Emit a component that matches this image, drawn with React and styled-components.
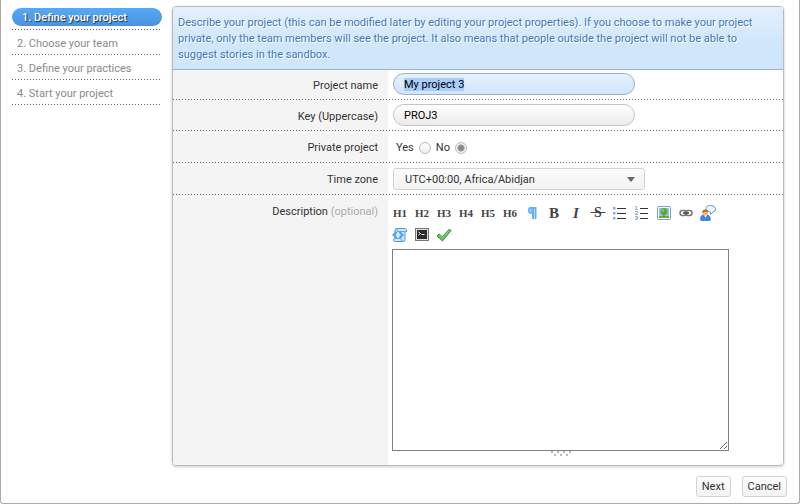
import React, { useEffect, useRef } from "react";
import styled, { createGlobalStyle, css } from "styled-components";

const GlobalStyle = createGlobalStyle`
  *, *::before, *::after { box-sizing: border-box; }
  body {
    margin: 0;
    background: #fff;
    color: #333;
    font: 11px/16px Roboto, "Noto Sans", sans-serif;
  }
  button, input, select, textarea { font: inherit; color: inherit; margin: 0; }
`;

const dotted = css`
  background-image: repeating-linear-gradient(to right, #666 0 1px, transparent 1px 3px);
  background-size: 100% 1px;
  background-position: left bottom;
  background-repeat: no-repeat;
`;

const Dialog = styled.div`
  display: flex;
  flex-direction: column;
  min-height: 100vh;
  padding: 6px 12px 6px 11px;
  border: 1px solid #aaa;
  border-top: 0;
  border-radius: 0 0 3px 3px;
`;

const Columns = styled.div`
  display: flex;
  flex: 1;
  align-items: stretch;
  gap: 10px;
  padding-right: 3px;
`;

const Steps = styled.ol`
  flex: 0 0 150px;
  margin: 0;
  padding: 0;
  list-style: none;
`;

const Step = styled.li`
  height: 25px;
  padding: 4px 0 2px;
  ${dotted}
  background-size: 148px 1px;
  &:first-child {
    height: 24px;
    padding-top: 2px;
  }
`;

const StepLink = styled.a`
  display: block;
  height: 18px;
  padding: 0 5px;
  line-height: 20px;
  color: #8a8a8a;
  text-decoration: none;
  &[aria-current="step"] {
    padding: 0 10px;
    border-radius: 9px;
    color: #fff;
    font-weight: 500;
    text-shadow: 1px 1px 1px #234;
    background: linear-gradient(#57a9f8, #4b93dd);
  }
`;

const Panel = styled.section`
  flex: 1;
  display: flex;
  flex-direction: column;
  min-width: 0;
  border: 1px solid #bbb;
  border-radius: 4px;
  box-shadow: 0 1px 3px rgba(0, 0, 0, 0.2);
  overflow: hidden;
`;

const Intro = styled.p`
  margin: 0;
  padding: 8px 20px 6px 5px;
  min-height: 63px;
  border-bottom: 1px solid #9bb3c9;
  color: #4079b8;
  text-shadow: 1px 1px 0 #fff;
  background: linear-gradient(#e3f0fd, #d0e6fb 60%);
`;

const Row = styled.div`
  display: flex;
  position: relative;
  flex: ${(p) => (p.$fill ? "1 0 auto" : "none")};
  min-height: ${(p) => p.$height}px;
  &:not(:last-child)::after {
    content: "";
    position: absolute;
    inset: auto 0 0 0;
    height: 1px;
    ${dotted}
  }
`;

const LabelCell = styled.div`
  flex: 0 0 215px;
  display: flex;
  justify-content: flex-end;
  align-items: ${(p) => (p.$top ? "flex-start" : "center")};
  padding: ${(p) => (p.$top ? "9px 10px 0 0" : "2px 10px 0 0")};
  background: #f4f4f4;
`;

const Optional = styled.span`
  color: #aaa;
`;

const ValueCell = styled.div`
  flex: 1;
  display: flex;
  align-items: center;
  min-width: 0;
  padding: 0 5px;
`;

const EditorCell = styled.div`
  flex: 1;
  min-width: 0;
  padding: 10px 4px 9px;
`;

const TextInput = styled.input`
  width: 242px;
  height: 22px;
  padding: 1px 10px 0;
  border: 1px solid #c4c4c4;
  border-radius: 11px;
  color: #000;
  background: linear-gradient(#fff, #ebebeb);
  outline: none;
  ${ValueCell} > & { margin-bottom: 2px; }
  &::selection { color: #000; background: #a8cdfb; }
  &:focus {
    border-color: #9bb0c5;
    background: linear-gradient(#e5f1fd, #d0e6fb);
  }
`;

const RadioGroup = styled.div`
  display: flex;
  gap: 5px;
  padding: 2px 0 0 3px;
`;

const RadioLabel = styled.label`
  display: flex;
  align-items: center;
  gap: 5px;
`;

const Radio = styled.input`
  appearance: none;
  width: 12px;
  height: 12px;
  border: 1px solid #bbb;
  border-radius: 50%;
  background: linear-gradient(#fff, #eee);
  &:checked { background: radial-gradient(circle, #888 0 2px, #999 3px, #f2f2f2 4px); }
`;

const SelectBox = styled.div`
  position: relative;
  width: 252px;
  svg {
    position: absolute;
    top: 9px;
    right: 10px;
    pointer-events: none;
  }
`;

const Select = styled.select`
  appearance: none;
  display: block;
  width: 100%;
  height: 22px;
  padding: 1px 24px 0 11px;
  border: 1px solid #d3d3d3;
  border-radius: 3px;
  background: linear-gradient(#fbfbfb, #f3f3f3);
`;

const Toolbar = styled.div`
  display: flex;
  flex-wrap: wrap;
  gap: 6px;
  max-width: 337px;
`;

const Tool = styled.button`
  display: flex;
  align-items: center;
  justify-content: center;
  width: 16px;
  height: 16px;
  padding: 0;
  border: 0;
  background: none;
  white-space: nowrap;
  color: #444;
  font: bold ${(p) => p.$size || 11}px/16px "Liberation Serif", serif;
  font-style: ${(p) => (p.$italic ? "italic" : "normal")};
  text-decoration: ${(p) => (p.$strike ? "line-through" : "none")};
`;

const Editor = styled.textarea`
  display: block;
  width: 337px;
  height: 202px;
  margin-top: 6px;
  padding: 4px;
  border: 1px solid #808080;
  resize: both;
  outline: none;
`;

const Grip = styled.div`
  width: 337px;
  height: 5px;
  display: flex;
  justify-content: center;
`;

const Actions = styled.div`
  display: flex;
  justify-content: flex-end;
  gap: 11px;
  padding-top: 10px;
`;

const ActionButton = styled.button`
  height: 21px;
  padding: 0 5px;
  border: 1px solid #d3d3d3;
  border-radius: 3px;
  background: linear-gradient(#fcfcfc, #f3f3f3);
`;

const Icon = ({ children }) => (
  <svg width="16" height="16" viewBox="0 0 16 16" aria-hidden="true">{children}</svg>
);

const ParagraphIcon = () => (
  <Icon>
    <path d="M6 2h6.500v12h-2V4H10v10H8V9H7C5 9 4 7.500 4 5.500S4.500 2 6 2z" fill="#6eb0ee" />
    <path d="M5.500 4h2v3H6z" fill="#a9d3f8" />
  </Icon>
);

const BulletsIcon = () => (
  <Icon>
    <path d="M5 3.500h9M5 8.500h9M5 13.500h9" stroke="#333" />
    <path d="M1 2h2.500v2.500H1zM1 7h2.500v2.500H1zM1 12h2.500v2.500H1z" fill="#7fabe6" />
  </Icon>
);

const NumbersIcon = () => (
  <Icon>
    <path d="M6 3.500h8M6 8.500h8M6 13.500h8" stroke="#333" />
    <path d="M1 1.500h1.500v3M1 4.500h3M1 6.500h2.500v1.500L1 9.500h3M1 11.500h2.500V13H2h1.500v1.500H1" fill="none" stroke="#8bb2e8" />
  </Icon>
);

const PictureIcon = () => (
  <Icon>
    <rect x="1.500" y="1.500" width="13" height="13" rx="1" fill="#fff" stroke="#779fc7" />
    <path d="M3 3h10v10H3z" fill="#8fc4f5" />
    <path d="M3 11h10v2H3z" fill="#72a93f" />
    <path d="M7.500 8h1v4h-1z" fill="#7a5730" />
    <circle cx="8" cy="6.500" r="3.500" fill="#5aa63a" />
    <circle cx="7" cy="5.500" r="1.500" fill="#7fc658" />
  </Icon>
);

const LinkIcon = () => (
  <Icon>
    <rect x="2" y="5.500" width="7" height="5" rx="2.500" fill="none" stroke="#777" strokeWidth="1.500" />
    <rect x="7" y="5.500" width="7" height="5" rx="2.500" fill="none" stroke="#777" strokeWidth="1.500" />
    <path d="M5 8h6" stroke="#444" strokeWidth="1.500" />
  </Icon>
);

const PersonIcon = () => (
  <Icon>
    <path d="M6 3.500Q6 .5 10.500.5T15.500 3.500 13 7L10.500 9.500V7Q6 6.500 6 3.500z" fill="#eef6ff" stroke="#6699d5" />
    <path d="M.8 15.500Q0 10.500 3 10h4.500Q10.800 10.500 10.200 15.500z" fill="#3d86d8" stroke="#2564ae" strokeWidth=".6" />
    <circle cx="5.300" cy="8" r="2.900" fill="#efb781" />
    <path d="M2.200 8Q2 4.500 5.300 4.500T8.500 7L5 6.500z" fill="#b0662a" />
    <path d="M4 10.500l1.500 2 1.500-2z" fill="#fff" />
  </Icon>
);

const ScriptIcon = () => (
  <Icon>
    <path d="M4 1.500h9.500Q15.500 2 14.500 4.500H13v8q0 2-2 2H2.500Q.5 13.500 2 11.500h1V3z" fill="#cfe6fc" stroke="#4b94dc" />
    <path d="M4 1.500Q6 2 5 4.500h9M2 11.500h7q0 3 2 3" fill="none" stroke="#65a8e9" />
    <path d="M4.500 5L1.500 8l3 3M7.500 5l3 3-3 3" fill="none" stroke="#4d9fee" strokeWidth="2" />
  </Icon>
);

const TerminalIcon = () => (
  <Icon>
    <rect x="1.500" y="1.500" width="13" height="12" fill="#ddd" stroke="#777" />
    <path d="M3 3h10v9H3z" fill="#2c2c2c" />
    <path d="M4.500 5l2 1.500-2 1.500M7.500 7.500h3" fill="none" stroke="#eee" />
  </Icon>
);

const CheckIcon = () => (
  <Icon>
    <path d="M1 9l2-2 3.300 2.700L13.500 2 15 3.700 6.500 14z" fill="#64b95d" stroke="#3d963d" strokeLinejoin="round" />
    <path d="M3 8l3.300 3L13.500 3.500" fill="none" stroke="#94d38a" />
  </Icon>
);

const steps = ["Define your project", "Choose your team", "Define your practices", "Start your project"];

const tools = [
  ...[1, 2, 3, 4, 5, 6].map((n) => ({ name: `Heading ${n}`, content: `H${n}` })),
  { name: "Paragraph", content: <ParagraphIcon /> },
  { name: "Bold", content: "B", size: 15 },
  { name: "Italic", content: "I", size: 15, italic: true },
  { name: "Strikethrough", content: <>&nbsp;S&nbsp;</>, size: 14, strike: true },
  { name: "Bulleted list", content: <BulletsIcon /> },
  { name: "Numbered list", content: <NumbersIcon /> },
  { name: "Picture", content: <PictureIcon /> },
  { name: "Link", content: <LinkIcon /> },
  { name: "Mention", content: <PersonIcon /> },
  { name: "Source", content: <ScriptIcon /> },
  { name: "Code block", content: <TerminalIcon /> },
  { name: "Preview", content: <CheckIcon /> },
];

export default function App() {
  const nameRef = useRef(null);

  useEffect(() => {
    nameRef.current.focus();
    nameRef.current.select();
  }, []);

  return (
    <>
      <GlobalStyle />
      <Dialog>
        <Columns>
          <Steps>
            {steps.map((step, i) => (
              <Step key={step}>
                <StepLink href="#" aria-current={i === 0 ? "step" : undefined}>
                  {i + 1}. {step}
                </StepLink>
              </Step>
            ))}
          </Steps>
          <Panel>
            <Intro>
              Describe your project (this can be modified later by editing your project properties). If you choose to make your project
              <br />
              private, only the team members will see the project. It also means that people outside the project will not be able to
              <br />
              suggest stories in the sandbox.
            </Intro>
            <Row $height={30}>
              <LabelCell><label htmlFor="name">Project name</label></LabelCell>
              <ValueCell><TextInput id="name" ref={nameRef} defaultValue="My project 3" /></ValueCell>
            </Row>
            <Row $height={31}>
              <LabelCell><label htmlFor="key">Key (Uppercase)</label></LabelCell>
              <ValueCell><TextInput id="key" defaultValue="PROJ3" /></ValueCell>
            </Row>
            <Row $height={32}>
              <LabelCell><span id="private">Private project</span></LabelCell>
              <ValueCell>
                <RadioGroup role="radiogroup" aria-labelledby="private">
                  <RadioLabel>Yes <Radio type="radio" name="private" value="yes" /></RadioLabel>
                  <RadioLabel>No <Radio type="radio" name="private" value="no" defaultChecked /></RadioLabel>
                </RadioGroup>
              </ValueCell>
            </Row>
            <Row $height={32}>
              <LabelCell><label htmlFor="zone">Time zone</label></LabelCell>
              <ValueCell>
                <SelectBox>
                  <Select id="zone"><option>UTC+00:00, Africa/Abidjan</option></Select>
                  <svg width="8" height="5" viewBox="0 0 8 5" aria-hidden="true"><path d="M0 0h8L4 5z" fill="#666" /></svg>
                </SelectBox>
              </ValueCell>
            </Row>
            <Row $height={270} $fill>
              <LabelCell $top>
                <label htmlFor="description">Description <Optional>(optional)</Optional></label>
              </LabelCell>
              <EditorCell>
                <Toolbar role="toolbar" aria-label="Formatting">
                  {tools.map((t) => (
                    <Tool key={t.name} type="button" aria-label={t.name} $size={t.size} $italic={t.italic} $strike={t.strike}>
                      {t.content}
                    </Tool>
                  ))}
                </Toolbar>
                <Editor id="description" />
                <Grip>
                  <svg width="20" height="5" viewBox="0 0 20 5" aria-hidden="true">
                    <path d="M0 0h2v2H0zM6 0h2v2H6zM12 0h2v2h-2zM18 0h2v2h-2zM3 3h2v2H3zM9 3h2v2H9zM15 3h2v2h-2z" fill="#b4b9c0" />
                  </svg>
                </Grip>
              </EditorCell>
            </Row>
          </Panel>
        </Columns>
        <Actions>
          <ActionButton type="button">Next</ActionButton>
          <ActionButton type="button">Cancel</ActionButton>
        </Actions>
      </Dialog>
    </>
  );
}
